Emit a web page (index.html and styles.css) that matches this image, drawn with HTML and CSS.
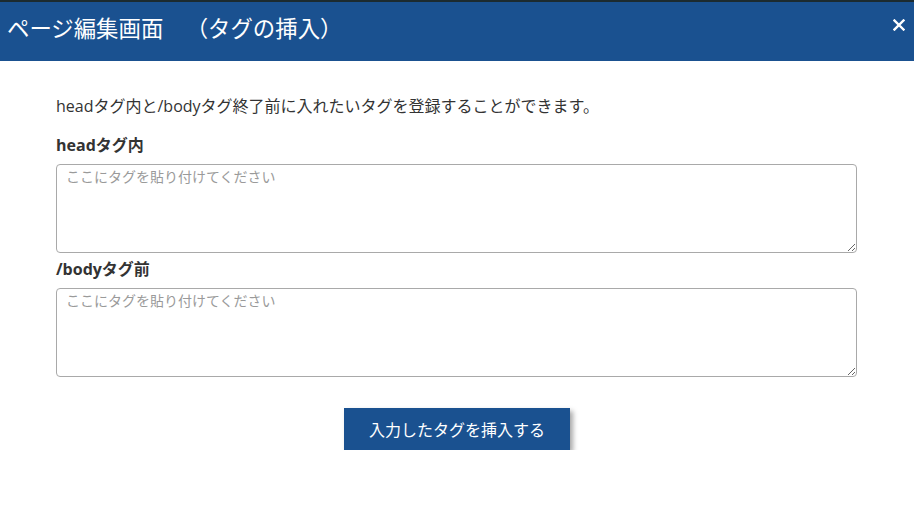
FILE: index.html
```html
<!DOCTYPE html>
<html lang="ja">
<head>
<meta charset="utf-8">
<title>ページ編集画面</title>
<link rel="stylesheet" href="styles.css">
</head>
<body>
<div class="topstrip"></div>
<header class="modal-header">
  <h1 class="modal-title">ページ編集画面　（タグの挿入）</h1>
  <button class="close-btn" type="button" aria-label="閉じる">
    <svg width="12" height="12" viewBox="0 0 12 12"><path d="M1.5 1.5 L10.5 10.5 M10.5 1.5 L1.5 10.5" stroke="#fff" stroke-width="2.4" stroke-linecap="square"/></svg>
  </button>
</header>
<main class="modal-body">
  <p class="desc">headタグ内と/bodyタグ終了前に入れたいタグを登録することができます。</p>
  <label class="field-label">headタグ内</label>
  <textarea class="field" placeholder="ここにタグを貼り付けてください"></textarea>
  <label class="field-label">/bodyタグ前</label>
  <textarea class="field" placeholder="ここにタグを貼り付けてください"></textarea>
  <div class="actions">
    <button class="submit" type="button">入力したタグを挿入する</button>
  </div>
</main>
</body>
</html>
```
FILE: styles.css
```css
html, body {
  margin: 0;
  padding: 0;
  background: #ffffff;
}
body {
  font-family: "Open Sans", "Noto Sans CJK JP", sans-serif;
  color: #333333;
  text-spacing-trim: space-all;
}
.topstrip {
  height: 2px;
  background: #1c2b30;
}
.modal-header {
  height: 59px;
  background: #1a5190;
  display: flex;
  align-items: flex-start;
  justify-content: space-between;
  box-sizing: border-box;
  padding: 10px 8px 0 7px;
}
.modal-title {
  margin: 0;
  font-family: "Noto Sans CJK JP", sans-serif;
  font-size: 22.4px;
  font-weight: normal;
  line-height: 30px;
  color: #ffffff;
  text-spacing-trim: space-all;
}
.close-btn {
  background: none;
  border: 0;
  padding: 0;
  margin-top: 7px;
  width: 13px;
  height: 13px;
  display: flex;
  cursor: pointer;
}
.modal-body {
  padding: 34px 57px 0 56px;
}
.desc {
  margin: 0 0 16px;
  font-size: 16px;
  line-height: 23px;
}
.field-label {
  display: block;
  font-size: 16px;
  font-weight: bold;
  line-height: 23px;
  margin-bottom: 7px;
}
.field {
  display: block;
  box-sizing: border-box;
  width: 100%;
  height: 89px;
  border: 1px solid #a9a9a9;
  border-radius: 4px;
  padding: 1px 9px;
  font-family: "Noto Sans CJK JP", sans-serif;
  font-size: 14px;
  line-height: 20px;
  color: #333;
  margin: 0 0 5px;
  resize: vertical;
}
.field::placeholder {
  color: #9a9a9a;
}
.actions {
  display: flex;
  justify-content: center;
  padding-top: 26px;
}
.submit {
  width: 226px;
  height: 42px;
  margin-left: 1px;
  background: #1a5190;
  color: #ffffff;
  border: 0;
  border-radius: 0;
  font-family: "Noto Sans CJK JP", sans-serif;
  font-size: 16px;
  box-shadow: 3px 3px 5px rgba(0, 0, 0, 0.35);
  cursor: pointer;
}
```
